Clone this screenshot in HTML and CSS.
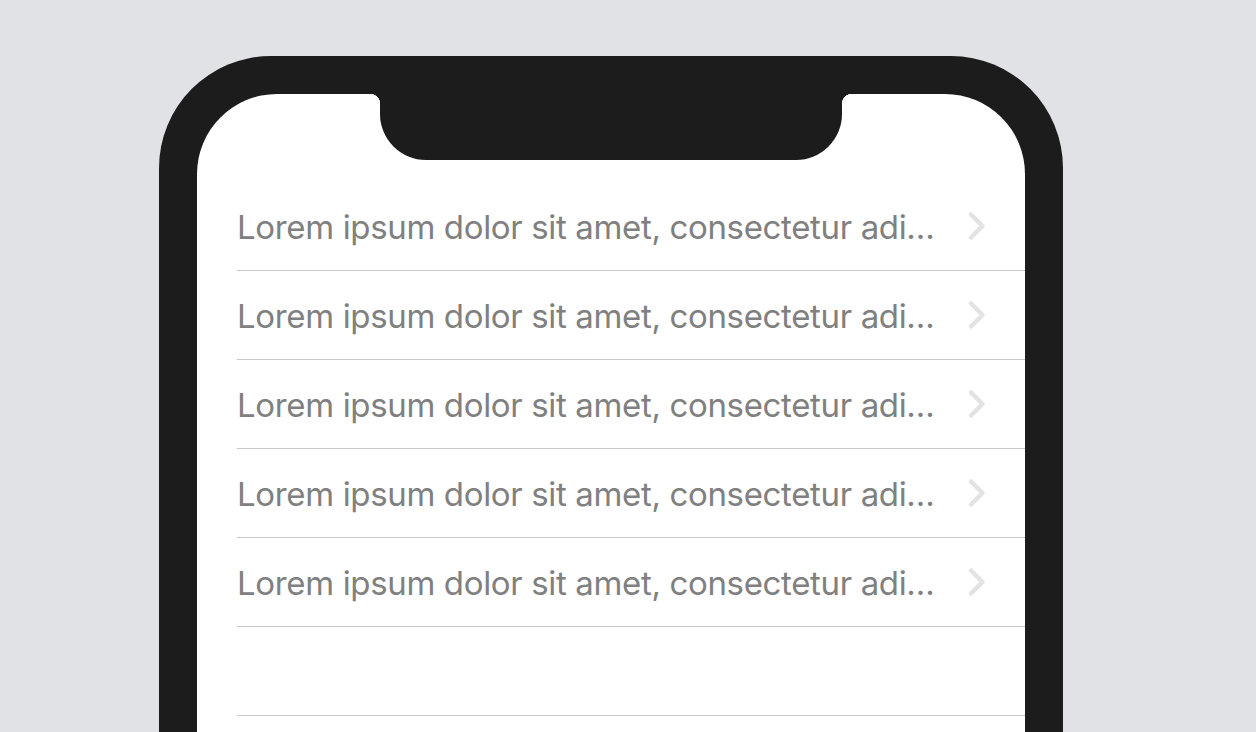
FILE: index.html
```html
<!DOCTYPE html>
<html lang="en">
    <head>
        <title>List</title>
        <meta charset="utf-8">
        <meta name="viewport" content="width=device-width, initial-scale=1.0">
        <link rel="stylesheet" href="styles.css">
    </head>
    <body>
        <div class="phone">
            <div class="screen">
                <div class="notch"></div>
                <ul class="list">
                    <li class="row">
                        <span class="label">Lorem ipsum dolor sit amet, consectetur adi…</span>
                        <svg class="chevron" width="20" height="30" viewBox="0 0 20 30"><polyline points="4,3.5 15.5,15 4,26.5"/></svg>
                    </li>
                    <li class="row">
                        <span class="label">Lorem ipsum dolor sit amet, consectetur adi…</span>
                        <svg class="chevron" width="20" height="30" viewBox="0 0 20 30"><polyline points="4,3.5 15.5,15 4,26.5"/></svg>
                    </li>
                    <li class="row">
                        <span class="label">Lorem ipsum dolor sit amet, consectetur adi…</span>
                        <svg class="chevron" width="20" height="30" viewBox="0 0 20 30"><polyline points="4,3.5 15.5,15 4,26.5"/></svg>
                    </li>
                    <li class="row">
                        <span class="label">Lorem ipsum dolor sit amet, consectetur adi…</span>
                        <svg class="chevron" width="20" height="30" viewBox="0 0 20 30"><polyline points="4,3.5 15.5,15 4,26.5"/></svg>
                    </li>
                    <li class="row">
                        <span class="label">Lorem ipsum dolor sit amet, consectetur adi…</span>
                        <svg class="chevron" width="20" height="30" viewBox="0 0 20 30"><polyline points="4,3.5 15.5,15 4,26.5"/></svg>
                    </li>
                    <li class="row empty"></li>
                    <li class="row empty"></li>
                </ul>
            </div>
        </div>
    </body>
</html>
```

FILE: styles.css
```css
:root {
    --frame: #1c1c1c;
    --line: #c8c8cb;
}
html, body {
    margin: 0;
    height: 100%;
    overflow: hidden;
}
body {
    background: #e1e2e6;
    font-family: Inter, "Noto Sans", "Liberation Sans", sans-serif;
}
.phone {
    box-sizing: border-box;
    width: 904px;
    height: 900px;
    margin: 56px 0 0 159px;
    padding: 38px 38px 0;
    background: var(--frame);
    border-radius: 112px 112px 0 0;
}
.screen {
    position: relative;
    height: 100%;
    background: white;
    border-radius: 80px 80px 0 0;
    padding-top: 88px;
    box-sizing: border-box;
}
.notch {
    position: absolute;
    top: 0;
    left: 183px;
    width: 462px;
    height: 66px;
    background: var(--frame);
    border-radius: 0 0 46px 46px;
}
.notch::before,
.notch::after {
    content: "";
    position: absolute;
    top: 0;
    width: 10px;
    height: 10px;
}
.notch::before {
    left: -10px;
    background: radial-gradient(circle at 0 100%, transparent 10px, var(--frame) 10.5px);
}
.notch::after {
    right: -10px;
    background: radial-gradient(circle at 100% 100%, transparent 10px, var(--frame) 10.5px);
}
.list {
    list-style: none;
    margin: 0 0 0 40px;
    padding: 0;
}
.row {
    display: flex;
    align-items: center;
    height: 88px;
    border-bottom: 1px solid var(--line);
}
.label {
    flex: 1;
    min-width: 0;
    padding-top: 2px;
    white-space: nowrap;
    overflow: hidden;
    text-overflow: ellipsis;
    font-size: 33px;
    color: #808080;
    letter-spacing: -0.35px;
}
.chevron {
    flex: none;
    margin: 0 38px 0 26px;
}
.chevron polyline {
    fill: none;
    stroke: #e3e3e5;
    stroke-width: 4.5;
    stroke-linecap: round;
    stroke-linejoin: round;
}
```
